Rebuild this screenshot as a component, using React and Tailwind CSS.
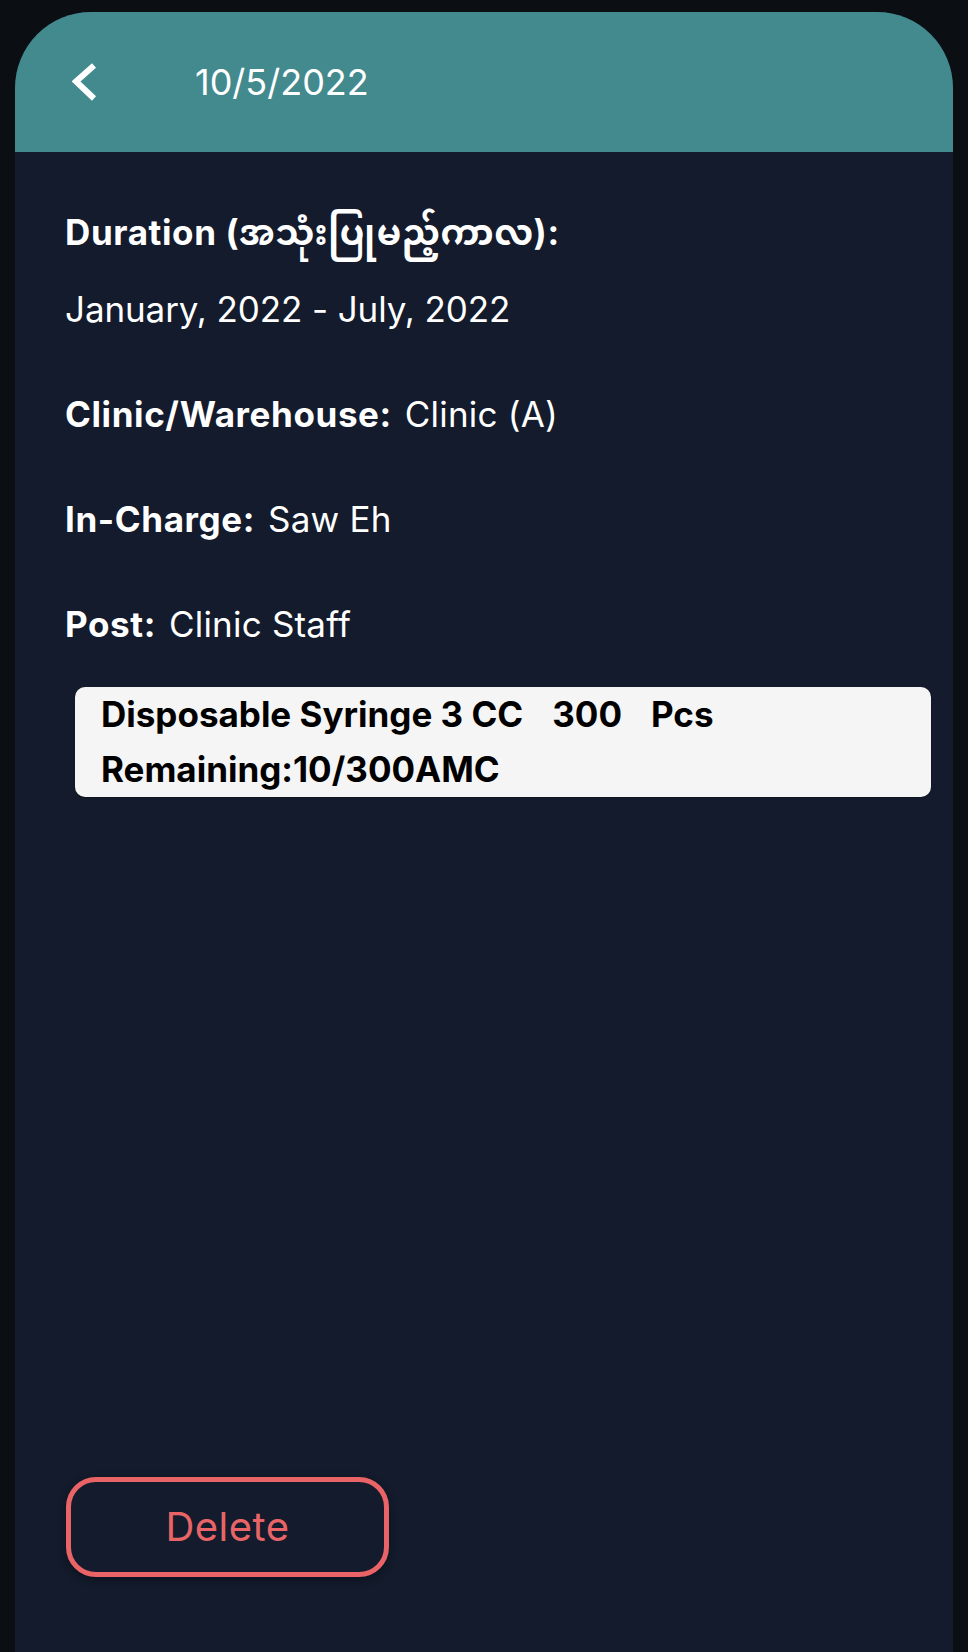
import React from 'react';

const sans = "font-['Inter','Noto_Sans_Myanmar','Noto_Sans',sans-serif]";

function BackChevron() {
  return (
    <svg width="26" height="40" viewBox="0 0 26 40" fill="none">
      <polyline points="22,3.5 4,19.5 22,36.5" stroke="#ffffff" strokeWidth="6" strokeLinejoin="miter" />
    </svg>
  );
}

function InfoRow({ label, value }) {
  return (
    <div className="mt-[65px] flex items-center leading-[40px] text-white">
      <span className="text-[35px] font-bold tracking-[0.6px]">{label}</span>
      <span className="ml-[13px] text-[35px] font-normal tracking-[0.2px]">{value}</span>
    </div>
  );
}

export default function App() {
  return (
    <div className={`flex h-[1652px] flex-col bg-[#0b0e13] px-[15px] pt-[12px] ${sans}`}>
      <div className="flex flex-1 flex-col overflow-hidden rounded-t-[76px] bg-[#131b2c]">
        <header className="flex h-[140px] shrink-0 items-center bg-[#438a8e] pl-[57px]">
          <BackChevron />
          <h1 className="ml-[97px] text-[36px] font-normal text-white">10/5/2022</h1>
        </header>

        <main className="flex flex-1 flex-col pl-[50px]">
          <div className="mt-[60px] text-[35px] font-bold leading-[40px] tracking-[0.6px] text-white">
            Duration (အသုံးပြုမည့်ကာလ):
          </div>
          <div className="mt-[37px] text-[35px] leading-[40px] tracking-[-0.1px] text-white">January, 2022 - July, 2022</div>

          <InfoRow label="Clinic/Warehouse:" value="Clinic (A)" />
          <InfoRow label="In-Charge:" value="Saw Eh" />
          <InfoRow label="Post:" value="Clinic Staff" />

          <div className="mt-[43px] ml-[10px] mr-[22px] h-[110px] rounded-[10px] bg-[#f5f5f5] pl-[26px] text-[35px] font-bold leading-[55px] text-black shadow-[0_1px_2px_rgba(0,0,0,0.3)]">
            <div className="flex">
              <span>Disposable Syringe 3 CC</span>
              <span className="ml-[29px]">300</span>
              <span className="ml-[29px]">Pcs</span>
            </div>
            <div>Remaining:10/300AMC</div>
          </div>

          <button className="mt-auto mb-[75px] ml-[1px] flex h-[100px] w-[323px] items-center justify-center rounded-[30px] border-[5px] border-[#ea6467] text-[40px] font-normal tracking-[0.5px] text-[#e86466] shadow-[0_3px_8px_rgba(0,0,0,0.35)]">
            Delete
          </button>
        </main>
      </div>
    </div>
  );
}
